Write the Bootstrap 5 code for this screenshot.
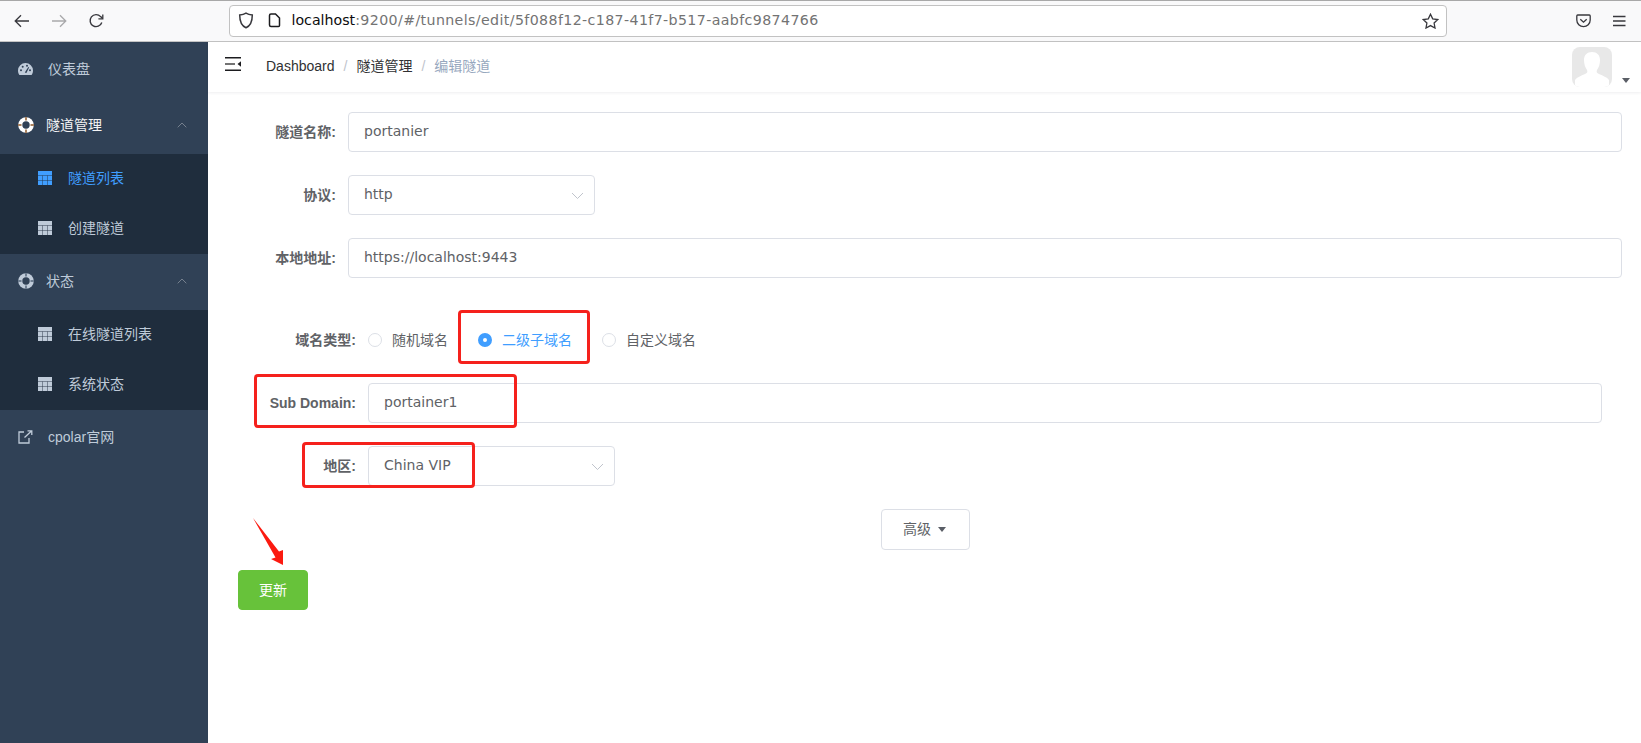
<!DOCTYPE html>
<html lang="zh">
<head>
<meta charset="utf-8">
<title>编辑隧道</title>
<link rel="stylesheet" href="https://cdn.jsdelivr.net/npm/bootstrap@5.3.0/dist/css/bootstrap.min.css">
<style>
html,body{height:743px;overflow:hidden;margin:0;background:#fff;font-family:"Liberation Sans","Noto Sans CJK SC",sans-serif;font-size:14px}
.tb{height:42px;background:#f9f9fa;border-top:1px solid #a8a8a8;border-bottom:1px solid #c4c4c4}
.tb-nav{width:229px;padding-left:14px;gap:21px}
.url{width:1218px;height:32px;margin-top:-1px;background:#fff;border:1px solid #c2c2c2;border-radius:4px;font-family:"DejaVu Sans",sans-serif;font-size:14.2px;color:#737373;padding-left:8px;white-space:nowrap}
.url-txt{letter-spacing:.38px;padding-top:1px}
.url b{font-weight:400;color:#0c0c0d;letter-spacing:0}
.tb-end{flex:1;padding-right:15px;gap:21px}
.shell{height:701px;position:relative}
.side{width:208px;background:#304156;color:#bfcbd9;flex:none}
.s-item{height:56px;padding-left:18px;padding-bottom:2px}
.s-item .s-ic{width:30px;flex:none}
.s-open{color:#f4f4f5}
.s-open .s-ic{width:28px}
.s-sub{background:#1f2d3d}
.s-subitem{height:50px;padding-left:38px;padding-bottom:2px}
.s-subitem .s-ic{width:30px;flex:none}
.s-active{color:#409eff}
.s-chev{margin-left:auto;margin-right:21px}
.side-txt{color:#bfcbd9}
.hdr{height:50px;box-shadow:0 1px 3px rgba(0,21,41,.07);padding-left:17px;position:relative}
.crumbs{margin-left:25px;color:#303133;padding-bottom:2px}
.crumbs i{font-style:normal;color:#c0c4cc;margin:0 9px;font-weight:400}
.crumbs span.cur{color:#97a8be}
.ava{margin-left:auto;width:40px;height:40px;background:#e8e8e8;border-radius:8px;overflow:hidden;margin-right:10px}
.ava-caret{width:0;height:0;border:4px solid transparent;border-top:5px solid #5a5e66;border-bottom:0;margin-right:11px;margin-top:26px}
.frm{padding:20px 19px 0 20px}
.f-row{display:flex;min-height:40px;margin-bottom:23px}
.f-label{width:120px;flex:none;padding-right:12px;text-align:right;line-height:40px;font-weight:700;color:#606266;font-family:"Liberation Sans","Noto Sans CJK SC",sans-serif;white-space:nowrap}
.f-ctl{flex:1;min-width:0}
.in-box{height:40px;border:1px solid #dcdfe6;border-radius:4px;padding:0 15px 2px;color:#606266;font-size:14px;box-shadow:none;font-family:"DejaVu Sans","Noto Sans CJK SC",sans-serif;background-color:#fff}
.sel-w{width:247px;position:relative}
.sel-w svg{position:absolute;right:11px;top:17px}
.sub-f{padding:19px 20px 0}
.rad{height:40px;color:#606266;margin-right:30px;font-family:"Liberation Sans","Noto Sans CJK SC",sans-serif;white-space:nowrap;gap:10px}
.rad-dot{width:14px;height:14px;border:1px solid #dcdfe6;border-radius:50%;background:#fff;flex:none}
.rad-on{color:#409eff}
.rad-on .rad-dot{background:#fff;border:5px solid #409eff}
.adv{width:89px;height:41px;border:1px solid #dcdfe6;border-radius:4px;background:#fff;color:#606266;font-size:14px;font-family:"Liberation Sans","Noto Sans CJK SC",sans-serif;padding:0 2px 0 0;gap:7px}
.adv-caret{width:0;height:0;border:4.5px solid transparent;border-top:5px solid #5a5e66;border-bottom:0}
.adv-w{margin-bottom:20px;padding-left:653px}
.go{width:70px;height:40px;margin-left:10px;background:#67c23a;border:1px solid #67c23a;border-radius:4px;color:#fff;font-size:14px;padding:0;font-family:"Liberation Sans","Noto Sans CJK SC",sans-serif}
.mark-box{position:absolute;border:3px solid #f5211c;border-radius:4px;pointer-events:none}
.mb1{left:458px;top:268px;width:132px;height:54px}
.mb2{left:254px;top:332px;width:263px;height:54px}
.mb3{left:302px;top:400px;width:173px;height:46px}
.mark-arrow{position:absolute;left:250px;top:474px}
</style>
</head>
<body>
<div class="tb d-flex align-items-center">
  <div class="tb-nav d-flex align-items-center">
    <svg width="16" height="14" viewBox="0 0 16 14" fill="none" stroke="#38383d" stroke-width="1.3"><path d="M15 7H1.5M7 1.2 1.2 7 7 12.8"/></svg>
    <svg width="16" height="14" viewBox="0 0 16 14" fill="none" stroke="#a9a9ab" stroke-width="1.3"><path d="M1 7h13.5M9 1.2 14.8 7 9 12.8"/></svg>
    <svg width="16" height="16" viewBox="0 0 16 16" fill="none" stroke="#38383d" stroke-width="1.4"><path d="M13.8 9.5A6 6 0 1 1 12.6 3.6L14.6 5.6"/><path d="M14.8 1.5v4.4h-4.4" stroke-width="1.3"/></svg>
  </div>
  <div class="url d-flex align-items-center">
    <svg class="me-2" width="16" height="17" viewBox="0 0 16 17" fill="none" stroke="#38383d" stroke-width="1.5"><path d="M8 1.2c2 1.3 4.2 1.7 6.3 1.8 0 5.5-1.3 10.6-6.3 12.8C3 13.6 1.7 8.500 1.700 3c2.100-.1 4.300-.5 6.300-1.800z"/></svg>
    <svg class="ms-2 me-2" width="13" height="15" viewBox="0 0 13 15" fill="#fff" stroke="#1c1c1f" stroke-width="1.5"><path d="M1.500 2.500a1.500 1.500 0 0 1 1.500-1.500h4.500l4 4v7.500a1 1 0 0 1-1 1H3a1.500 1.500 0 0 1-1.500-1.500z"/></svg>
    <span class="ms-1 url-txt"><b>localhost</b>:9200/#/tunnels/edit/5f088f12-c187-41f7-b517-aabfc9874766</span>
    <svg class="ms-auto me-2" width="17" height="16" viewBox="0 0 17 16" fill="none" stroke="#38383d" stroke-width="1.3"><path d="m8.500 1.200 2.200 4.600 5 .7-3.600 3.500.9 5-4.500-2.400L4 15l.9-5L1.300 6.500l5-.7z"/></svg>
  </div>
  <div class="tb-end d-flex align-items-center justify-content-end">
    <svg width="15" height="14" viewBox="0 0 15 14" fill="none" stroke="#38383d" stroke-width="1.3"><path d="M1.700 1h11.600c.5 0 .9.400.9.900v4.100a6.700 6.700 0 0 1-13.400 0V1.900c0-.5.400-.9.900-.9z"/><path d="m4.300 5.200 3.200 3 3.200-3"/></svg>
    <svg width="14" height="12" viewBox="0 0 14 12" fill="none" stroke="#38383d" stroke-width="1.300"><path d="M1 1.500h12.500M1 6h12.500M1 10.500h12.500"/></svg>
  </div>
</div>
<div class="shell d-flex">
  <nav class="side">
    <div class="s-item d-flex align-items-center">
      <span class="s-ic d-flex"><svg width="15" height="12" viewBox="0 0 15 12" fill="#bfcbd9"><path d="M7.500 0A7.500 7.500 0 0 0 0 7.500c0 1.700.5 3.200 1.400 4.500h12.200c.9-1.300 1.400-2.800 1.400-4.500A7.500 7.500 0 0 0 7.500 0z"/><g fill="#304156"><circle cx="3" cy="7.300" r="1"/><circle cx="4.700" cy="3.700" r="1"/><circle cx="9" cy="2.700" r="1"/><circle cx="12" cy="7.300" r="1"/><path d="M6.800 9.500 10.300 4l.8.400-2.700 5.600z"/></g></svg></span>
      <span>仪表盘</span>
    </div>
    <div class="s-item s-open d-flex align-items-center">
      <span class="s-ic d-flex"><svg width="16" height="16" viewBox="0 0 16 16"><circle cx="8" cy="8" r="7.800" fill="#fff"/><circle cx="8" cy="8" r="3.700" fill="#304156"/><path d="M8 0v3.500M8 12.500V16M0 8h3.500M12.500 8H16" stroke="#a8815f" stroke-width="2"/></svg></span>
      <span>隧道管理</span>
      <svg class="s-chev" width="10" height="6" viewBox="0 0 10 6" fill="none" stroke="#76808e" stroke-width="1"><path d="m.7 5.300 4.300-4.300 4.300 4.300"/></svg>
    </div>
    <div class="s-sub">
      <div class="s-subitem s-active d-flex align-items-center">
        <span class="s-ic d-flex"><svg width="14" height="14" viewBox="0 0 14 14"><path d="M0 0h14v14H0z" fill="#409eff"/><path d="M0 4.500h14M0 9.500h14M4.500 4.500V14M9.500 4.500V14" stroke="#1f2d3d" stroke-opacity=".45"/></svg></span>
        <span>隧道列表</span>
      </div>
      <div class="s-subitem d-flex align-items-center">
        <span class="s-ic d-flex"><svg width="14" height="14" viewBox="0 0 14 14"><path d="M0 0h14v14H0z" fill="#bfcbd9"/><path d="M0 4.500h14M0 9.500h14M4.500 4.500V14M9.500 4.500V14" stroke="#1f2d3d" stroke-opacity=".45"/></svg></span>
        <span>创建隧道</span>
      </div>
    </div>
    <div class="s-item s-open d-flex align-items-center">
      <span class="s-ic d-flex"><svg width="16" height="16" viewBox="0 0 16 16"><circle cx="8" cy="8" r="7.800" fill="#bfcbd9"/><circle cx="8" cy="8" r="3.700" fill="#304156"/><path d="M8 0v3.500M8 12.500V16M0 8h3.500M12.500 8H16" stroke="#6f7f92" stroke-width="2"/></svg></span>
      <span class="side-txt">状态</span>
      <svg class="s-chev" width="10" height="6" viewBox="0 0 10 6" fill="none" stroke="#76808e" stroke-width="1"><path d="m.7 5.300 4.300-4.300 4.300 4.300"/></svg>
    </div>
    <div class="s-sub">
      <div class="s-subitem d-flex align-items-center">
        <span class="s-ic d-flex"><svg width="14" height="14" viewBox="0 0 14 14"><path d="M0 0h14v14H0z" fill="#bfcbd9"/><path d="M0 4.500h14M0 9.500h14M4.500 4.500V14M9.500 4.500V14" stroke="#1f2d3d" stroke-opacity=".45"/></svg></span>
        <span>在线隧道列表</span>
      </div>
      <div class="s-subitem d-flex align-items-center">
        <span class="s-ic d-flex"><svg width="14" height="14" viewBox="0 0 14 14"><path d="M0 0h14v14H0z" fill="#bfcbd9"/><path d="M0 4.500h14M0 9.500h14M4.500 4.500V14M9.500 4.500V14" stroke="#1f2d3d" stroke-opacity=".45"/></svg></span>
        <span>系统状态</span>
      </div>
    </div>
    <div class="s-item d-flex align-items-center">
      <span class="s-ic d-flex"><svg width="15" height="14" viewBox="0 0 15 14" fill="none" stroke="#bfcbd9" stroke-width="1.300"><path d="M6 2H1v11h10V8"/><path d="M6.500 7.500 13.500 1M9.500 .8h4.300V5"/></svg></span>
      <span>cpolar官网</span>
    </div>
  </nav>
  <main class="flex-grow-1">
    <div class="hdr d-flex align-items-center">
      <svg class="mb-2" width="16" height="14" viewBox="0 0 16 14"><path d="M0 .8h16M0 13.200h16" stroke="#1c1c1f" stroke-width="1.500"/><path d="M0 7h10" stroke="#444" stroke-width="1.500"/><path d="M16 4.200v5.600L12.500 7z" fill="#1c1c1f"/></svg>
      <div class="crumbs"><span>Dashboard</span><i>/</i><span>隧道管理</span><i>/</i><span class="cur">编辑隧道</span></div>
      <div class="ava"><svg width="40" height="40" viewBox="0 0 40 40" fill="#fff"><path d="M20 5c5 0 8 3 8 8 0 4-1 7-3 10-1 2 0 3 2 4 4 2 8 3 10 6v7H3v-7c2-3 6-4 10-6 2-1 3-2 2-4-2-3-3-6-3-10 0-5 3-8 8-8z"/></svg></div>
      <span class="ava-caret"></span>
    </div>
    <form class="frm">
      <div class="f-row">
        <label class="f-label">隧道名称:</label>
        <div class="f-ctl"><input class="form-control in-box" value="portanier"></div>
      </div>
      <div class="f-row">
        <label class="f-label">协议:</label>
        <div class="f-ctl"><div class="sel-w"><input class="form-control in-box" value="http"><svg width="13" height="8" viewBox="0 0 13 8" fill="none" stroke="#c0c4cc" stroke-width="1"><path d="m1 1 5.500 5.500L12 1"/></svg></div></div>
      </div>
      <div class="f-row">
        <label class="f-label">本地地址:</label>
        <div class="f-ctl"><input class="form-control in-box" value="https://localhost:9443"></div>
      </div>
      <div class="sub-f">
        <div class="f-row">
          <label class="f-label">域名类型:</label>
          <div class="f-ctl d-flex">
            <span class="rad d-flex align-items-center"><span class="rad-dot"></span>随机域名</span>
            <span class="rad rad-on d-flex align-items-center"><span class="rad-dot"></span>二级子域名</span>
            <span class="rad d-flex align-items-center"><span class="rad-dot"></span>自定义域名</span>
          </div>
        </div>
        <div class="f-row">
          <label class="f-label">Sub Domain:</label>
          <div class="f-ctl"><input class="form-control in-box" value="portainer1"></div>
        </div>
        <div class="f-row">
          <label class="f-label">地区:</label>
          <div class="f-ctl"><div class="sel-w"><input class="form-control in-box" value="China VIP"><svg width="13" height="8" viewBox="0 0 13 8" fill="none" stroke="#c0c4cc" stroke-width="1"><path d="m1 1 5.500 5.500L12 1"/></svg></div></div>
        </div>
      </div>
      <div class="adv-w"><button type="button" class="btn adv d-inline-flex align-items-center justify-content-center">高级<span class="adv-caret"></span></button></div>
      <button type="button" class="btn go">更新</button>
    </form>
  </main>
  <div class="mark-box mb1"></div>
  <div class="mark-box mb2"></div>
  <div class="mark-box mb3"></div>
  <svg class="mark-arrow" width="36" height="52" viewBox="0 0 36 52"><path d="M3 2 29 35.500 33 34 33 49 21 43 25.500 41.500z" fill="#fb1a10"/></svg>
</div>
<script src="https://cdn.jsdelivr.net/npm/bootstrap@5.3.0/dist/js/bootstrap.bundle.min.js"></script>
</body>
</html>
